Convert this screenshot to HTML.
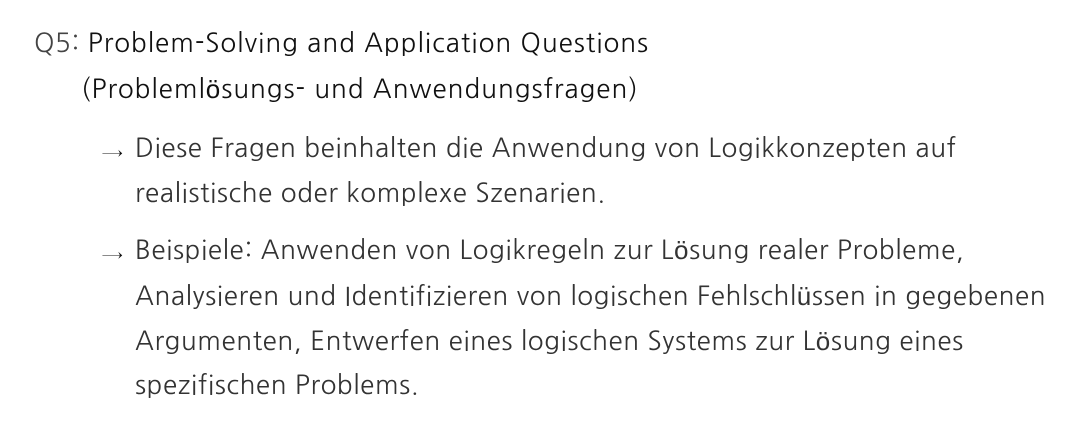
<!DOCTYPE html>
<html><head><meta charset="utf-8"><style>
html,body{margin:0;padding:0;background:#fff;width:1078px;height:438px;overflow:hidden}
body{position:relative;font-family:"NanumGothic","Liberation Sans",sans-serif;font-size:26px;color:#333}
.l{position:absolute;white-space:nowrap;line-height:46px;letter-spacing:0.6px}
.h{color:#111;letter-spacing:1px}
.q{color:#444}
.ar{position:absolute;left:102px;font-size:22px;color:#111;line-height:46px}
</style></head><body>
<div class="l" style="left:34px;top:20px"><span class="q">Q5:</span> <span class="h">Problem-Solving and Application Questions</span></div>
<div class="l h" style="left:81px;top:66px">(Problemlösungs- und Anwendungsfragen)</div>
<div class="ar" style="top:131px">→</div>
<div class="l" style="left:135px;top:125px">Diese Fragen beinhalten die Anwendung von Logikkonzepten auf</div>
<div class="l" style="left:135px;top:170px">realistische oder komplexe Szenarien.</div>
<div class="ar" style="top:233px">→</div>
<div class="l" style="left:135px;top:227px">Beispiele: Anwenden von Logikregeln zur Lösung realer Probleme,</div>
<div class="l" style="left:135px;top:273px">Analysieren und Identifizieren von logischen Fehlschlüssen in gegebenen</div>
<div class="l" style="left:135px;top:318px">Argumenten, Entwerfen eines logischen Systems zur Lösung eines</div>
<div class="l" style="left:135px;top:362px">spezifischen Problems.</div>
</body></html>
